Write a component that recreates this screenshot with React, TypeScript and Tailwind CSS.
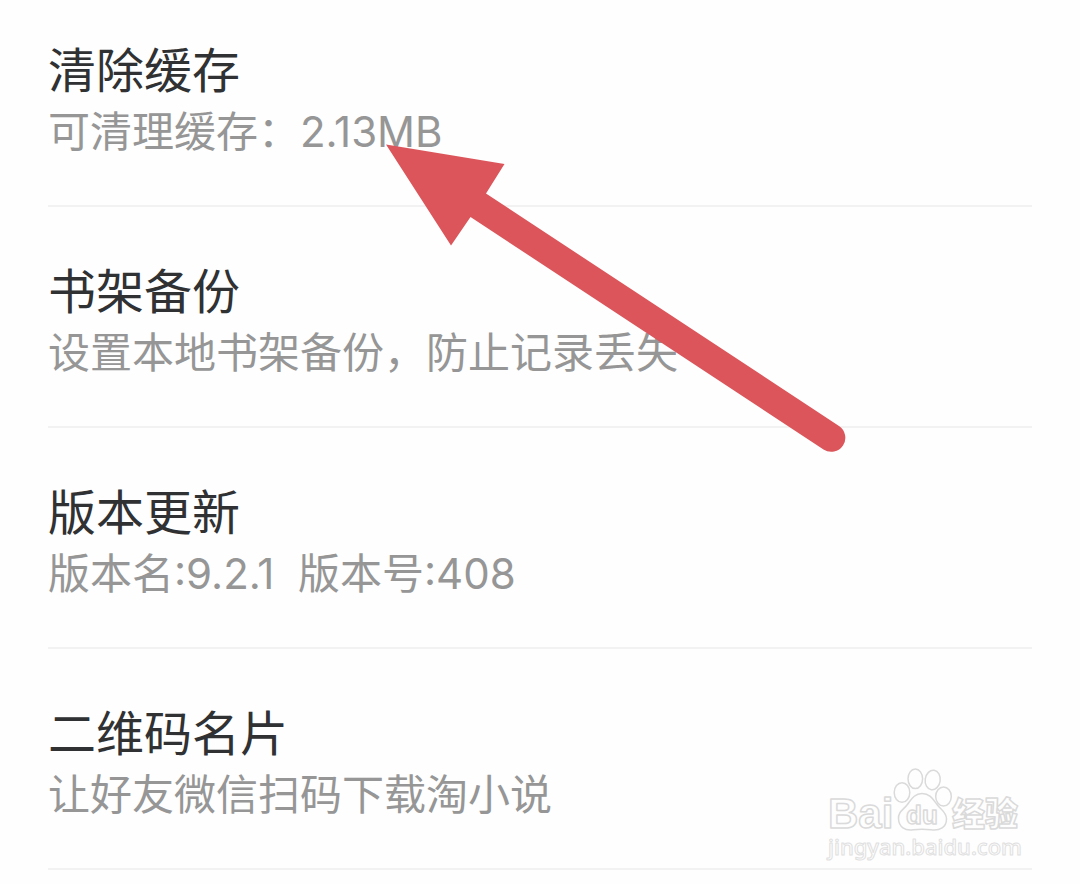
const items = [
  { title: '清除缓存', detail: '可清理缓存：2.13MB' },
  { title: '书架备份', detail: '设置本地书架备份，防止记录丢失' },
  { title: '版本更新', detail: '版本名:9.2.1  版本号:408' },
  { title: '二维码名片', detail: '让好友微信扫码下载淘小说' },
];

function Pointer() {
  return (
    <svg
      className="pointer-events-none absolute left-96 top-36"
      width="464"
      height="312"
      viewBox="384 144 464 312"
      aria-hidden="true"
    >
      <path
        d="M386 144.500L504.500 164L486 193.500L839 426A14 14 0 0 1 823.500 449.500L470.500 217L451 245.500Z"
        fill="#db555a"
      />
    </svg>
  );
}

function Watermark() {
  return (
    <svg
      className="pointer-events-none absolute bottom-5 right-14"
      width="200"
      height="100"
      viewBox="824 764 200 100"
      fill="#fefefe"
      stroke="#dadada"
      strokeWidth="1.500"
      strokeLinejoin="round"
    >
      <text x="828" y="828" className="font-['Liberation_Sans',sans-serif] text-[42px] font-bold">Bai</text>
      <ellipse cx="902" cy="792.500" rx="7.800" ry="9.800" />
      <ellipse cx="915.300" cy="778.800" rx="7.300" ry="9.800" />
      <ellipse cx="932.700" cy="780" rx="7.500" ry="9.800" transform="rotate(8 932.700 780)" />
      <ellipse cx="943.500" cy="796.500" rx="7.800" ry="9.500" />
      <path d="M922 793.500C914 793.500 911 800 907 805C903 810 898 812 898.500 819C899 827 905 831 913 829.800C919 829 925 829 931 829.800C940 831 946.500 827 946.500 819C946.500 812 941 810 937 804.500C933 799 930 793.500 922 793.500Z" />
      <text x="906" y="824" className="font-['Liberation_Sans',sans-serif] text-[26px] font-bold">du</text>
      <text x="952" y="826" className="font-['Noto_Sans_CJK_SC',sans-serif] text-[33px] font-black">经验</text>
      <text x="828" y="855" strokeWidth="1" stroke="#e0e0e0" className="font-['Noto_Sans',sans-serif] text-[22px] font-medium">jingyan.baidu.com</text>
    </svg>
  );
}

export default function App() {
  return (
    <main className="relative flow-root min-h-screen overflow-hidden bg-[#fefefe] font-[Inter,'Noto_Sans_CJK_SC',sans-serif]">
      <ul className="-mt-3.5 px-12">
        {items.map((item) => (
          <li key={item.title} className="border-b-2 border-[#f2f2f2]">
            <button type="button" className="block w-full pb-11 pt-[54px] text-left">
              <span className="block text-[48px] leading-[62px] text-[#303133]">{item.title}</span>
              <span className="block whitespace-pre-wrap text-[42px] leading-[59px] text-[#969696]">{item.detail}</span>
            </button>
          </li>
        ))}
      </ul>
      <Pointer />
      <Watermark />
    </main>
  );
}
